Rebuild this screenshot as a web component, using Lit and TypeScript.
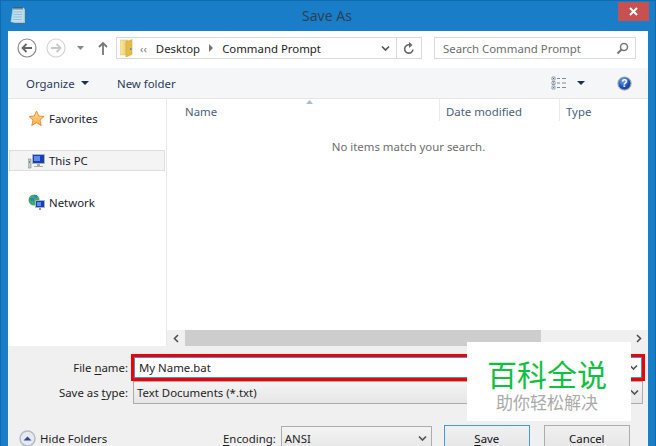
import { LitElement, html, css } from "lit";
import { customElement } from "lit/decorators.js";

const chev = html`<svg width="9" height="7" viewBox="0 0 9 7"><path d="M1 1.5 4.5 5 8 1.5" fill="none" stroke="#555" stroke-width="1.7"/></svg>`;

@customElement("app-root")
export class AppRoot extends LitElement {
  static styles = css`
    :host { display: block; width: 656px; height: 446px; overflow: hidden; position: relative; background: #1a7dc8;
      font-family: "Noto Sans", "Open Sans", sans-serif; font-size: 11.4px; color: #1e1e1e; }
    * { box-sizing: border-box; }
    .frame { height: 446px; display: flex; flex-direction: column; border-top: 1px solid #0f6cb0; border-left: 1px solid #0f6cb0; border-right: 1px solid #0f6cb0; padding: 0 7px; }
    .title { height: 30px; flex: none; display: flex; align-items: center; justify-content: center; font-size: 14px; color: #2a4254; position: relative; padding-bottom: 1px; padding-right: 2px; }
    .title-icon { position: absolute; left: 2px; top: 5px; }
    .close { position: absolute; right: -1px; top: 1px; width: 31px; height: 19px; background: #c75050; display: flex; align-items: center; justify-content: center; }
    .client { flex: 1; min-height: 0; background: #fff; display: flex; flex-direction: column; }
    .nav { height: 37px; flex: none; display: flex; align-items: center; padding: 0 12px 3px 9px; }
    .navbtns { width: 99px; height: 24px; flex: none; display: flex; align-items: center; }
    .addr { width: 306px; height: 22px; flex: none; border: 1px solid #d9d9d9; display: flex; align-items: center; padding-left: 3px; }
    .addr .crumbs { flex: 1; display: flex; align-items: center; color: #1e1e1e; }
    .addr .ch { margin-left: 7px; margin-right: 9px; color: #808080; font-size: 11px; }
    .tri { margin: 0 9px 0 9px; width: 0; height: 0; border-left: 4px solid #777; border-top: 4px solid transparent; border-bottom: 4px solid transparent; }
    .addr .dd { width: 22px; display: flex; justify-content: center; }
    .addr .rf { width: 25px; height: 20px; border-left: 1px solid #d9d9d9; display: flex; align-items: center; justify-content: center; }
    .search { width: 202px; height: 22px; flex: none; margin-left: 12px; border: 1px solid #d9d9d9; display: flex; align-items: center; justify-content: space-between; padding: 0 6px 0 8px; color: #6d6d6d; }
    .tools { height: 31px; flex: none; background: #f5f6f7; border-bottom: 1px solid #e6e6e6; display: flex; align-items: center; padding: 0 16px 0 18px; color: #2a3a5a; }
    .organize { display: flex; align-items: center; gap: 6px; width: 91px; }
    .caret { width: 0; height: 0; border-top: 4px solid #1c2e50; border-left: 4px solid transparent; border-right: 4px solid transparent; }
    .spacer { flex: 1; }
    .views { display: flex; align-items: center; gap: 10px; margin-right: 32px; }
    .main { flex: 1; min-height: 0; display: flex; }
    .side { width: 159px; flex: none; border-right: 1px solid #e8e8e8; padding: 9px 0 0 1px; }
    .side-item { height: 21px; display: flex; align-items: center; gap: 4px; padding-left: 18px; margin-bottom: 21px; width: 156px; color: #1a1a2e; border: 1px solid transparent; }
    .side-item.sel { background: #f4f4f4; border-color: #dedede; }
    .content { flex: 1; min-width: 0; display: flex; flex-direction: column; position: relative; }
    .cols { height: 27px; flex: none; display: flex; color: #4c607a; position: relative; }
    .col { padding: 5px 0 0 6px; border-right: 1px solid #eaeaea; height: 22px; }
    .col.name { width: 273px; padding-left: 18px; }
    .col.date { width: 120px; }
    .col.type { border: 0; }
    .sort { position: absolute; left: 139px; top: 1px; }
    .empty { flex: 1; text-align: center; color: #6d6d6d; padding-top: 13px; padding-left: 2px; }
    .hbar { height: 16px; flex: none; background: #f0f0f0; display: flex; align-items: center; }
    .hbar .btn { width: 18px; display: flex; justify-content: center; align-items: center; flex: none; }
    .hbar .thumb { width: 356px; height: 16px; background: #cdcdcd; flex: none; }
    .bottom { height: 100px; flex: none; background: #f0f0f0; padding: 8px 3px 0 0; }
    .row { display: flex; align-items: center; }
    .label { width: 120px; text-align: right; flex: none; color: #1e1e1e; }
    .hl { flex: 1; margin-left: 3px; height: 27px; border: 3px solid #f00000; }
    .input { height: 100%; background: #fff; border: 1px solid #3d92d8; display: flex; align-items: center; justify-content: space-between; padding: 0 3px 1px 4px; }
    .select { flex: 1; margin: 0 2px 0 5px; height: 23px; border: 1px solid #acacac; background: linear-gradient(#f4f4f4, #e6e6e6); display: flex; align-items: center; justify-content: space-between; padding: 0 3px 0 3px; }
    .footer { display: flex; align-items: center; margin-top: 21px; height: 26px; padding-left: 11px; }
    .hide { display: flex; align-items: center; gap: 4px; width: 204px; }
    .enc { margin-right: 5px; }
    .enc-sel { width: 151px; height: 24px; flex: none; border: 1px solid #acacac; background: linear-gradient(#f4f4f4, #e6e6e6); display: flex; align-items: center; justify-content: space-between; padding: 0 4px 0 3px; }
    .b { width: 86px; height: 26px; flex: none; border: 1px solid #acacac; background: linear-gradient(#f0f0f0, #e5e5e5); display: flex; align-items: center; justify-content: center; margin-left: 14px; color: #111; }
    .b.def { border-color: #3d9be8; margin-left: 12px; }
    u { text-underline-offset: 2px; }
    .wm { position: absolute; left: 467px; top: 342px; width: 164px; height: 79px; background: #fff; display: flex; flex-direction: column; align-items: center; padding-right: 4px; font-family: "Noto Sans CJK SC", sans-serif; }
    .wm1 { color: #10c040; font-size: 30px; line-height: 36px; margin-top: 13px; font-weight: 400; white-space: nowrap; }
    .wm2 { color: #aaa; font-size: 17px; line-height: 22px; white-space: nowrap; }
  `;

  render() {
    return html`
      <div class="frame">
        <div class="title">
          <svg class="title-icon" width="16" height="19" viewBox="0 0 16 19"><path d="M4 3h11v14H3.500z" fill="#d9b98a"/><path d="M3 2h11v14H1z" fill="#bfe0ee" stroke="#a8cfe2" stroke-width=".6"/><path d="M4 1v2.500M6 1v2.500M8 1v2.500M10 1v2.500M12 1v2.500" stroke="#333"/><path d="M3.500 6h9M3.200 8.500h9M3 11h9M2.800 13.500h9" stroke="#93c2da"/></svg>
          Save As
          <div class="close"><svg width="9" height="9" viewBox="0 0 9 9"><path d="M1 1l7 7M8 1l-7 7" stroke="#fff" stroke-width="2"/></svg></div>
        </div>
        <div class="client">
          <div class="nav">
            <div class="navbtns">
              <svg width="99" height="24" viewBox="0 0 99 24">
                <circle cx="10" cy="12" r="9" fill="#fff" stroke="#8a8a8a" stroke-width="1.2"/>
                <path d="M15 12H6M9.500 8 5.500 12l4 4" fill="none" stroke="#666" stroke-width="1.800"/>
                <circle cx="39" cy="12" r="9" fill="#fff" stroke="#d4d4d4" stroke-width="1.2"/>
                <path d="M34 12h9M39.500 8l4 4-4 4" fill="none" stroke="#c8c8c8" stroke-width="1.800"/>
                <path d="M60 10h7l-3.500 4z" fill="#888"/>
                <path d="M86 19V7M82 11l4-4 4 4" fill="none" stroke="#777" stroke-width="1.800"/>
              </svg>
            </div>
            <div class="addr">
              <div class="crumbs">
                <svg width="13" height="18" viewBox="0 0 13 18"><defs><linearGradient id="f" x1="0" x2="1"><stop offset="0" stop-color="#f8e9a8"/><stop offset="1" stop-color="#e8c860"/></linearGradient></defs><path d="M0 1h8v15H0z" fill="url(#f)" stroke="#d9bd66" stroke-width=".5"/><path d="M6 3l6-2.500v15L6 18z" fill="#e4bc4c" stroke="#c9a030" stroke-width=".5"/><path d="M10 9h1.500v2H10z" fill="#4a90d8"/></svg>
                <span class="ch">‹‹</span><span>Desktop</span><span class="tri"></span><span>Command Prompt</span>
              </div>
              <div class="dd">${chev}</div>
              <div class="rf"><svg width="12" height="13" viewBox="0 0 12 13"><path d="M10 7.500A4.200 4.200 0 1 1 6.500 2.800" fill="none" stroke="#666" stroke-width="1.600"/><path d="M6 0v6l3.500-3z" fill="#666"/></svg></div>
            </div>
            <div class="search">
              <span>Search Command Prompt</span>
              <svg width="13" height="13" viewBox="0 0 13 13"><circle cx="8" cy="5" r="3.500" fill="none" stroke="#777" stroke-width="1.500"/><path d="M5.500 7.500 1.500 11.500" stroke="#777" stroke-width="2"/></svg>
            </div>
          </div>
          <div class="tools">
            <div class="organize">Organize <span class="caret"></span></div>
            <div>New folder</div>
            <div class="spacer"></div>
            <div class="views">
              <svg width="16" height="14" viewBox="0 0 16 14"><path d="M1 1h3v3H1zM1 5.500h3v3H1zM1 10h3v3H1z" fill="#fff" stroke="#7a8aa0" stroke-width=".8"/><path d="M2 2h1v1H2z" fill="#d33"/><path d="M2 6.500h1v1H2z" fill="#d33"/><path d="M2 11h1v1H2z" fill="#38c"/><path d="M6 2.500h3M11 2.500h4M6 7h3M11 7h4M6 11.500h3M11 11.500h4" stroke="#7a8aa0"/></svg>
              <span class="caret"></span>
            </div>
            <svg width="15" height="15" viewBox="0 0 16 16"><defs><radialGradient id="h" cx=".4" cy=".3"><stop offset="0" stop-color="#6fa5f0"/><stop offset="1" stop-color="#1a46b0"/></radialGradient></defs><circle cx="8" cy="8" r="7" fill="url(#h)" stroke="#9aa" stroke-width="1.200"/><text x="8" y="12" font-size="11" font-weight="700" text-anchor="middle" fill="#fff" font-family="Liberation Sans">?</text></svg>
          </div>
          <div class="main">
            <div class="side">
              <div class="side-item"><svg width="17" height="17" viewBox="0 0 17 17"><defs><linearGradient id="s" x1="0" x2="0" y1="0" y2="1"><stop offset="0" stop-color="#fde28a"/><stop offset="1" stop-color="#f9a94a"/></linearGradient></defs><path d="M8.500 1l2.200 5 5.300.5-4 3.600 1.200 5.400-4.700-2.800-4.700 2.800 1.200-5.400-4-3.600 5.300-.5z" fill="url(#s)" stroke="#e89040"/></svg><span>Favorites</span></div>
              <div class="side-item sel"><svg width="17" height="16" viewBox="0 0 17 16"><path d="M0 6h3v9H0z" fill="#c8c8c8" stroke="#888" stroke-width=".6"/><path d="M1 8h1v2H1z" fill="#3fae62"/><path d="M4.500 1.500h12v9h-12z" fill="#1b3fae" stroke="#a8b4c0"/><path d="M6 3h6v5H6z" fill="#5d8cf0"/><path d="M9 11h3v2h3v1H6v-1h3z" fill="#aaa"/></svg><span>This PC</span></div>
              <div class="side-item"><svg width="17" height="17" viewBox="0 0 17 17"><circle cx="6" cy="6" r="5.500" fill="#3fae62"/><path d="M2 4h4v3H3zM6 1h3v3H7z" fill="#3a78d8"/><path d="M7.500 6.500h9v7h-9z" fill="#1b3fae" stroke="#a8b4c0"/><path d="M9 8h4v4H9z" fill="#5d8cf0"/><path d="M11 14h2v2h-2z" fill="#999"/></svg><span>Network</span></div>
            </div>
            <div class="content">
              <div class="cols">
                <div class="col name">Name</div>
                <div class="col date">Date modified</div>
                <div class="col type">Type</div>
                <svg class="sort" width="7" height="4" viewBox="0 0 7 4"><path d="M0 4l3.500-4L7 4z" fill="#a9bdd0"/></svg>
              </div>
              <div class="empty">No items match your search.</div>
              <div class="hbar">
                <div class="btn"><svg width="6" height="9" viewBox="0 0 6 9"><path d="M5 1 1.500 4.500 5 8" fill="none" stroke="#505050" stroke-width="1.600"/></svg></div>
                <div class="thumb"></div>
                <div class="spacer"></div>
                <div class="btn"><svg width="6" height="9" viewBox="0 0 6 9"><path d="M1 1l3.500 3.500L1 8" fill="none" stroke="#505050" stroke-width="1.600"/></svg></div>
              </div>
            </div>
          </div>
          <div class="bottom">
            <div class="row">
              <div class="label">File <u>n</u>ame:</div>
              <div class="hl"><div class="input"><span>My Name.bat</span>${chev}</div></div>
            </div>
            <div class="row">
              <div class="label">Save as <u>t</u>ype:</div>
              <div class="select"><span>Text Documents (*.txt)</span>${chev}</div>
            </div>
            <div class="footer">
              <div class="hide">
                <svg width="17" height="17" viewBox="0 0 17 17"><circle cx="8.500" cy="8.500" r="7.500" fill="#e6eaf0" stroke="#b4bcc8" stroke-width="1.500"/><path d="M4.500 10.500 8.500 6.500l4 4z" fill="#2b4a8c"/></svg>
                <span>Hide Folders</span>
              </div>
              <div class="enc"><u>E</u>ncoding:</div>
              <div class="enc-sel"><span>ANSI</span>${chev}</div>
              <div class="b def"><span><u>S</u>ave</span></div>
              <div class="b">Cancel</div>
            </div>
          </div>
        </div>
      </div>
      <div class="wm"><div class="wm1">百科全说</div><div class="wm2">助你轻松解决</div></div>
    `;
  }
}
